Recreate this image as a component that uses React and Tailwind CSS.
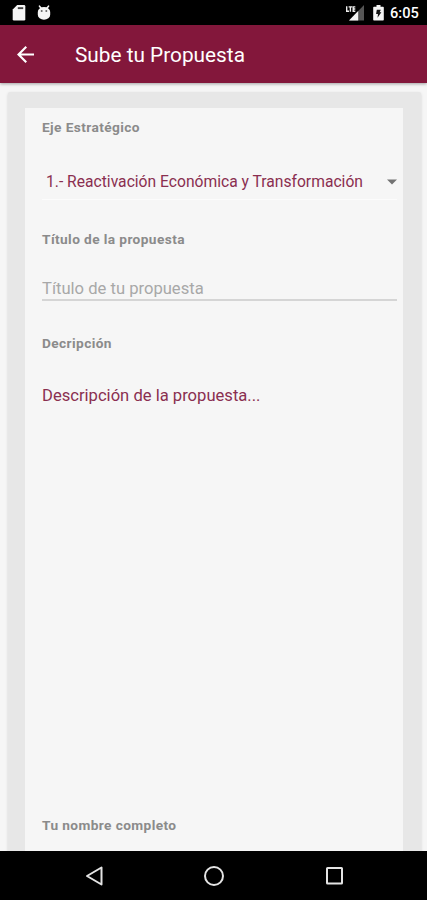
import React, { useState } from 'react'

const ejes = ['1.- Reactivación Económica y Transformación']

function StatusBar() {
  return (
    <div className="flex h-[25px] shrink-0 items-center bg-black pr-[7px] pl-[12px] text-white">
      <svg className="mt-[1px] h-[16px] w-[14px]" viewBox="0 0 14 16" fill="#f5f5f5">
        <path d="M5.200 0H12a1.300 1.300 0 0 1 1.300 1.300v13a1.300 1.300 0 0 1-1.300 1.300H2A1.300 1.300 0 0 1 .7 14.300V4.500z" />
        <path d="M5.800 2.200h5.400v1.900H5.800z" fill="#444" />
      </svg>
      <svg className="ml-[11px] h-[16px] w-[14px]" viewBox="0 0 14 16" fill="#f5f5f5">
        <path d="M2.500 1.200l1.700 2M11.500 1.200L9.800 3.200" stroke="#f5f5f5" strokeWidth="1.600" strokeLinecap="round" />
        <path d="M.8 7a6.200 4.900 0 0 1 12.400 0v2.800a6.200 5 0 0 1-12.400 0z" />
        <circle cx="4.700" cy="6" r="1" fill="#666" />
        <circle cx="9.300" cy="6" r="1" fill="#666" />
      </svg>
      <div className="flex-1" />
      <svg className="h-[16px] w-[20px]" viewBox="0 0 20 16" fill="none">
        <path d="M19 0v15.500H4z" fill="#555" />
        <path d="M13.200 6v9.500H4z" fill="#f5f5f5" />
        <path d="M0 0h11v7.500H0z" fill="#000" />
        <path d="M1.700 1.300v4.900H4M3.600 1.900h3.600M5.400 1.900v4.900M10.300 1.900H8.200v4.300h2.100M8.200 4h2.100" stroke="#eee" strokeWidth="1.400" />
      </svg>
      <svg className="ml-[8px] h-[16px] w-[11px]" viewBox="0 0 11 16">
        <path
          d="M3.500 0h4v1.800H10a.8.8 0 0 1 .8.800v12.200a.8.8 0 0 1-.8.800H1a.8.8 0 0 1-.8-.8V2.600A.8.8 0 0 1 1 1.800h2.500z"
          fill="#f5f5f5"
        />
        <path d="M3.800 4.800h4L6.700 7.300h1.700L4.500 12.800l.5-3.800H3.100z" fill="#111" />
      </svg>
      <span className="mt-[2px] ml-[6px] w-[30px] text-[14.6px] leading-none font-medium whitespace-nowrap">6:05</span>
    </div>
  )
}

function AppBar() {
  return (
    <header className="z-10 flex h-[58px] shrink-0 items-center bg-[#83173b] pl-[17px] text-white shadow-[0_1px_3px_rgba(0,0,0,0.35)]">
      <svg className="h-[17px] w-[17px]" viewBox="4 4 16 16" fill="white">
        <path d="M20 11H7.830l5.590-5.590L12 4l-8 8 8 8 1.410-1.410L7.830 13H20z" />
      </svg>
      <h1 className="mt-[2px] ml-[41px] text-[20.8px] leading-6 whitespace-nowrap">Sube tu Propuesta</h1>
    </header>
  )
}

function Label({ children }) {
  return (
    <div className="h-4 text-[13.7px] leading-[14px] font-bold tracking-[0.4px] whitespace-nowrap text-[#8b8b8b]">
      {children}
    </div>
  )
}

function NavBar() {
  return (
    <nav className="flex h-[49px] shrink-0 items-center bg-black pl-[84px]">
      <svg className="h-[22px] w-[260px]" viewBox="0 0 260 22" fill="none" stroke="#e4e4e4" strokeWidth="2">
        <path d="M17.500 2.500v17L3 11z" strokeLinejoin="round" />
        <circle cx="130" cy="11" r="9" />
        <rect x="243" y="3" width="15" height="15.500" rx=".5" />
      </svg>
    </nav>
  )
}

export default function App() {
  const [titulo, setTitulo] = useState('')
  const [descripcion, setDescripcion] = useState('')

  return (
    <div className="flex h-[900px] w-[427px] flex-col overflow-hidden bg-[#f6f6f6] font-['Roboto',sans-serif]">
      <StatusBar />
      <AppBar />
      <main className="min-h-0 flex-1 overflow-hidden pt-[9px] pr-[6px] pl-[8px]">
        <div className="h-[800px] rounded-[2px] bg-[#e7e7e7] pt-4 pr-[18px] pl-[17px] shadow-[0_1px_3px_rgba(0,0,0,0.15)]">
          <form className="h-full bg-[#f6f6f6] pt-[12px] pr-[6px] pl-[17px]">
            <Label>Eje Estratégico</Label>
            <div className="mt-[28px] flex h-[36px] items-center border-b border-[#fcfcfc] pl-[4px]">
              <span className="flex-1 text-[15.65px] whitespace-nowrap text-[#8a2f50]">{ejes[0]}</span>
              <svg className="h-[6px] w-[10px]" viewBox="0 0 10 6" fill="#737373">
                <path d="M0 .5h10L5 5.500z" />
              </svg>
            </div>

            <div className="mt-[32px]">
              <Label>Título de la propuesta</Label>
            </div>
            <input
              className="mt-[29px] block h-[24px] w-full border-b-2 border-[#d5d5d5] bg-transparent p-0 text-[16.6px] leading-[22px] text-[#8a2f50] outline-none placeholder:text-[#a8a8a8]"
              placeholder="Título de tu propuesta"
              value={titulo}
              onChange={(e) => setTitulo(e.target.value)}
            />

            <div className="mt-[35px]">
              <Label>Decripción</Label>
            </div>
            <textarea
              className="mt-[33px] block h-[433px] w-full resize-none bg-transparent p-0 text-[16.6px] leading-[22px] outline-none placeholder:text-[#8a2f50]"
              placeholder="Descripción de la propuesta..."
              value={descripcion}
              onChange={(e) => setDescripcion(e.target.value)}
            />
            <Label>Tu nombre completo</Label>
          </form>
        </div>
      </main>
      <NavBar />
    </div>
  )
}
